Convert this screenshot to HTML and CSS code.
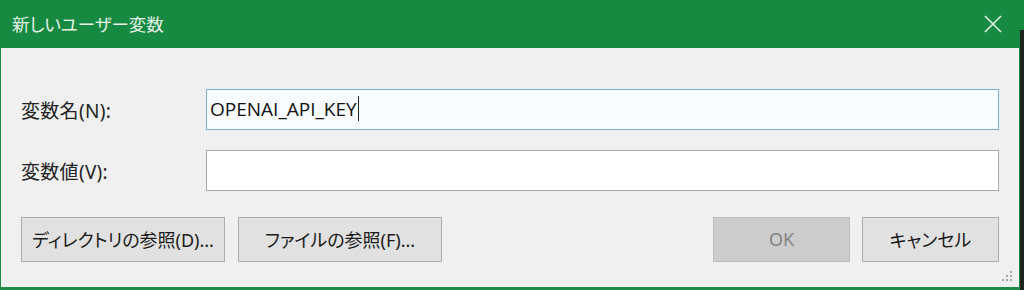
FILE: index.html
```html
<!DOCTYPE html>
<html lang="ja">
<head>
<meta charset="utf-8">
<title>新しいユーザー変数</title>
<link rel="stylesheet" href="styles.css">
</head>
<body>
<div class="window">
  <div class="titlebar">
    <span class="title">新しいユーザー変数</span>
    <svg class="close" width="20" height="20" viewBox="0 0 20 20" aria-label="閉じる">
      <path d="M2 2 L18 18 M18 2 L2 18" stroke="#dff3e3" stroke-width="1.6" fill="none"/>
    </svg>
  </div>
  <div class="content">
    <div class="field-row">
      <span class="label">変数名(N):</span>
      <div class="input focused"><span class="value">OPENAI_API_KEY</span><span class="caret"></span></div>
    </div>
    <div class="field-row">
      <span class="label">変数値(V):</span>
      <div class="input"></div>
    </div>
    <div class="button-row">
      <div class="btn-group">
        <button class="btn wide">ディレクトリの参照(D)...</button>
        <button class="btn wide">ファイルの参照(F)...</button>
      </div>
      <div class="btn-group right">
        <button class="btn narrow" disabled>OK</button>
        <button class="btn narrow">キャンセル</button>
      </div>
    </div>
  </div>
  <div class="grip">
    <span></span><span></span><span></span><span></span><span></span><span></span>
  </div>
</div>
</body>
</html>
```
FILE: styles.css
```css
* { box-sizing: border-box; }
html, body {
  margin: 0;
  padding: 0;
}
body {
  width: 1024px;
  height: 290px;
  overflow: hidden;
  background: linear-gradient(#178a42 0 30px, #1c2420 30px);
  font-family: "Noto Sans", "Noto Sans CJK JP", sans-serif;
  font-feature-settings: "palt";
  color: #1a1a1a;
}
.window {
  position: relative;
  width: 1020px;
  height: 290px;
  display: flex;
  flex-direction: column;
  background: #f0f0f0;
  border: 1px solid #1f8a47;
  border-top: none;
  border-bottom-width: 3px;
}
.titlebar {
  height: 48px;
  flex: none;
  background: #178a42;
  display: flex;
  align-items: center;
  justify-content: space-between;
  padding: 0 17px 0 12px;
  margin: 0 -1px;
}
.title {
  color: #e4f3e7;
  font-size: 17.5px;
  padding-bottom: 2px;
}
.close { display: block; margin-top: -1px; }
.content {
  flex: 1;
  display: flex;
  flex-direction: column;
  padding: 41px 20px 0 20px;
}
.field-row {
  display: flex;
  align-items: center;
  height: 41px;
  margin-bottom: 20px;
}
.label {
  width: 185px;
  flex: none;
  font-size: 19px;
  letter-spacing: 0.3px;
  color: #222;
}
.input {
  flex: 1;
  height: 41px;
  background: #ffffff;
  border: 1px solid #a9a9a9;
  display: flex;
  align-items: center;
  padding: 0 0 2px 3px;
}
.input.focused {
  border-color: #78aed4;
  background: #f8fcfe;
}
.value {
  font-family: "Open Sans", "Noto Sans", sans-serif;
  font-size: 19px;
  letter-spacing: 0;
  color: #111;
}
.caret {
  display: inline-block;
  width: 1px;
  height: 25px;
  background: #222;
  margin-left: 1px;
}
.button-row {
  display: flex;
  justify-content: space-between;
  margin-top: 6px;
}
.btn-group {
  display: flex;
  gap: 13px;
}
.btn-group.right { gap: 12px; }
.btn {
  height: 45px;
  background: #e1e1e1;
  border: 1px solid #adadad;
  font-family: "Noto Sans", "Noto Sans CJK JP", sans-serif;
  font-feature-settings: "palt";
  font-size: 18px;
  color: #1a1a1a;
  padding: 0 0 2px;
  border-radius: 0;
}
.btn.wide { width: 204px; }
.btn.narrow { width: 137px; }
.btn:disabled {
  background: #cccccc;
  border-color: #bfbfbf;
  color: #838383;
}
.grip {
  position: absolute;
  right: 5px;
  bottom: 4px;
  width: 12px;
  height: 12px;
  display: grid;
  grid-template-columns: repeat(3, 4px);
  grid-template-rows: repeat(3, 4px);
}
.grip span {
  width: 2px;
  height: 2px;
  background: #a6a6a6;
}
.grip span:nth-child(1) { grid-area: 1 / 3; }
.grip span:nth-child(2) { grid-area: 2 / 2; }
.grip span:nth-child(3) { grid-area: 2 / 3; }
.grip span:nth-child(4) { grid-area: 3 / 1; }
.grip span:nth-child(5) { grid-area: 3 / 2; }
.grip span:nth-child(6) { grid-area: 3 / 3; }
```
